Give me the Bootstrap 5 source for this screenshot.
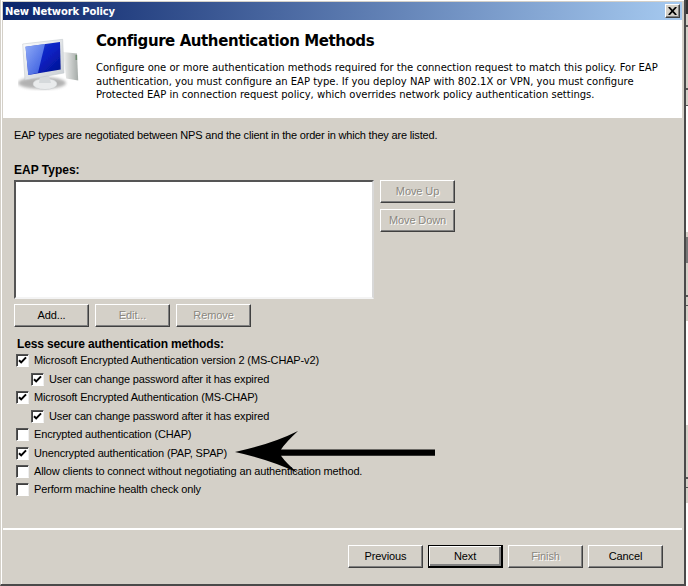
<!DOCTYPE html>
<html lang="en">
<head>
<meta charset="utf-8">
<title>New Network Policy</title>
<link href="https://cdn.jsdelivr.net/npm/bootstrap@5.3.0/dist/css/bootstrap.min.css" rel="stylesheet">
<style>
html,body{margin:0;height:586px;width:688px;overflow:hidden;background:#fff}
body{font-family:"Liberation Sans",Arial,sans-serif;font-size:11px;letter-spacing:-.18px;color:#000;line-height:14px}
.stage{width:688px;height:586px}
.frame{position:relative;width:686px;height:586px;background:#d4d0c8;border-left:1px solid #d4d0c8;border-right:2px solid #4a4a4a;border-bottom:2px solid #4a4a4a;box-shadow:inset 1px 1px 0 #fff;padding:2px 2px 0 2px}
.strip{width:2px;height:586px;background:linear-gradient(to bottom,#333 0 14px,#d4d0c8 14px 25px,#555 25px 27px,#d4d0c8 27px 88px,#555 88px 90px,#d4d0c8 90px 105px,#555 105px 106px,#fff 106px 232px,#d4d0c8 232px 237px,#777 237px 263px,#d4d0c8 263px 295px,#555 295px 297px,#d4d0c8 297px 305px,#555 305px 306px,#d4d0c8 306px 321px,#fff 321px 425px,#d4d0c8 425px 477px,#555 477px 479px,#d4d0c8 479px 487px,#555 487px 488px,#d4d0c8 488px 503px,#fff 503px)}
.titlebar{height:18px;background:linear-gradient(to right,#0a246a,#a6caf0);color:#fff;font-family:"DejaVu Sans",sans-serif;font-weight:700;font-size:10px;padding-left:2px;letter-spacing:-.14px}
.titletext{padding-top:1px}
.closebox{width:15px;height:14px;margin-right:2px;background:#d4d0c8;border:1px solid;border-color:#fff #404040 #404040 #fff;box-shadow:inset -1px -1px 0 #808080}
.headpane{height:98px;background:#fff}
.iconcell{width:93px;padding:16px 0 0 15px}
.headtitle{font-family:"DejaVu Sans",sans-serif;font-weight:700;font-size:15px;line-height:18px;margin:12px 0 0;letter-spacing:-.42px}
.headdesc{font-family:"DejaVu Sans",sans-serif;font-size:10px;line-height:13.5px;margin:11px 0 0;letter-spacing:0;white-space:nowrap}
.bodypane{padding:0 0 0 11px}
.intro{margin:10px 0 0;height:14px;white-space:nowrap}
.strongish{font-weight:700;font-size:12px}
.eaphead{margin:21px 0 3px;letter-spacing:0}
.listbox{width:360px;height:119px;background:#fff;border:2px solid;border-color:#555 #d8d8d8 #f4f4f4 #555;box-shadow:inset -1px -1px 0 #fff}
.winbtn.btn{width:75px;height:23px;padding:0;border-radius:0;background:#d4d0c8;color:#000;font-size:11px;letter-spacing:-.1px;line-height:19px;border:1px solid;border-color:#fff #404040 #404040 #fff;box-shadow:inset -1px -1px 0 #808080;--bs-btn-active-bg:#d4d0c8;opacity:1}
.winbtn.btn.disabled{color:#8a8780;text-shadow:1px 1px 0 #fff;border-color:#fff #404040 #404040 #fff;background:#d4d0c8;opacity:1}
.winbtn.btn.focused{outline:1px solid #000;outline-offset:-1px;border-color:#000;box-shadow:inset 1px 1px 0 #fff,inset -2px -2px 0 #808080;border-right-width:2px;border-bottom-width:2px;line-height:19px}
.sidebtns{margin-left:6px;gap:6px}
.addrow{margin-top:5px;gap:6px}
.lesshead{margin:10px 0 0 3px;letter-spacing:-.15px}
.opt{margin:0;min-height:0;padding:0;height:18px;display:flex;align-items:center;gap:5px;margin-left:2px}
.opt .form-check-input{float:none;margin:0;width:13px;height:13px;flex:none;border-radius:0;background-color:#fff;border:1px solid;border-color:#555 #eee #fff #555;box-shadow:inset 1px 1px 0 #404040;opacity:1}
.opt .form-check-input:checked{background-color:#fff;border-color:#555 #eee #fff #555;background-size:11px 11px;background-position:center;background-image:url("data:image/svg+xml,%3Csvg xmlns='http://www.w3.org/2000/svg' viewBox='0 0 11 11'%3E%3Cpath d='M2 5.2l2.2 2.2 4.8-5' fill='none' stroke='%23000' stroke-width='2'/%3E%3C/svg%3E")}
.opt .form-check-label{opacity:1;white-space:nowrap;line-height:14px;letter-spacing:-.15px}
.opt.sub{margin-left:17px;margin-top:1px}
.opt.gap1{margin-top:1px}
.footline{position:absolute;left:2px;right:2px;top:528px;height:2px;background:#fff}
.footbtns{position:absolute;top:545px;left:347px;gap:5px}
.arrowover{position:absolute;left:0;top:0;pointer-events:none}
</style>
</head>
<body>
<div class="stage d-flex">
  <div class="frame">
    <div class="titlebar d-flex align-items-center justify-content-between">
      <span class="titletext">New Network Policy</span>
      <div class="closebox d-flex align-items-center justify-content-center">
        <svg width="9" height="8" viewBox="0 0 9 8"><path d="M.8 0l7.4 8M8.200 0L.8 8" stroke="#000" stroke-width="1.800" fill="none"/></svg>
      </div>
    </div>
    <div class="headpane d-flex">
      <div class="iconcell">
        <svg width="62" height="56" viewBox="0 0 62 56">
          <defs>
            <linearGradient id="scr" x1="0" y1="0" x2="1" y2="1"><stop offset="0" stop-color="#2848d8"/><stop offset=".5" stop-color="#0a22c4"/><stop offset="1" stop-color="#02108c"/></linearGradient>
            <linearGradient id="gloss" x1="0" y1="0" x2="1" y2="1"><stop offset="0" stop-color="#a9c4ff"/><stop offset="1" stop-color="#3f66e6"/></linearGradient>
            <linearGradient id="bez" x1="0" y1="0" x2="1" y2="1"><stop offset="0" stop-color="#fbfcfd"/><stop offset="1" stop-color="#c8cdd2"/></linearGradient>
            <linearGradient id="tow" x1="0" y1="0" x2="1" y2="0"><stop offset="0" stop-color="#f2f2f2"/><stop offset="1" stop-color="#a5aba8"/></linearGradient>
            <filter id="sf"><feGaussianBlur stdDeviation=".45"/></filter>
            <filter id="sf2"><feGaussianBlur stdDeviation="1.800"/></filter>
          </defs>
          <g transform="translate(-18,-36)">
            <ellipse cx="42" cy="83" rx="24" ry="6" fill="#8a8a8a" opacity=".65" filter="url(#sf2)"/>
            <g filter="url(#sf)">
              <path d="M63 52l14 1.500 1.200 27-12-2z" fill="url(#tow)"/>
              <rect x="75.500" y="55" width="1.600" height="5" fill="#6e8c70"/>
              <ellipse cx="45" cy="84" rx="12" ry="5.500" fill="#e9ebec" stroke="#c4c8ca" stroke-width=".5"/>
              <path d="M40 76h9l2 7h-12z" fill="#d5d9db"/>
              <path d="M22.700 44L62.700 39.300 64 73 25 80z" fill="url(#bez)" stroke="#bfc5c9" stroke-width=".5"/>
              <path d="M25.500 46.700L60 42 60.700 69.500 28.300 75z" fill="url(#scr)"/>
              <path d="M25.500 46.700L45 44 38 72.800 28.300 75z" fill="url(#gloss)" opacity=".8"/>
            </g>
          </g>
        </svg>
      </div>
      <div>
        <h1 class="headtitle">Configure Authentication Methods</h1>
        <p class="headdesc">Configure one or more authentication methods required for the connection request to match this policy. For EAP<br>authentication, you must configure an EAP type. If you deploy NAP with 802.1X or VPN, you must configure<br>Protected EAP in connection request policy, which overrides network policy authentication settings.</p>
      </div>
    </div>
    <div class="bodypane">
      <p class="intro">EAP types are negotiated between NPS and the client in the order in which they are listed.</p>
      <div class="eaphead strongish">EAP Types:</div>
      <div class="d-flex">
        <div class="listbox"></div>
        <div class="sidebtns d-flex flex-column">
          <button type="button" class="btn winbtn disabled">Move Up</button>
          <button type="button" class="btn winbtn disabled">Move Down</button>
        </div>
      </div>
      <div class="addrow d-flex">
        <button type="button" class="btn winbtn">Add...</button>
        <button type="button" class="btn winbtn disabled">Edit...</button>
        <button type="button" class="btn winbtn disabled">Remove</button>
      </div>
      <div class="lesshead strongish">Less secure authentication methods:</div>
      <div class="form-check opt"><input class="form-check-input" type="checkbox" id="c1" checked><label class="form-check-label" for="c1">Microsoft Encrypted Authentication version 2 (MS-CHAP-v2)</label></div>
      <div class="form-check opt sub"><input class="form-check-input" type="checkbox" id="c2" checked><label class="form-check-label" for="c2">User can change password after it has expired</label></div>
      <div class="form-check opt"><input class="form-check-input" type="checkbox" id="c3" checked><label class="form-check-label" for="c3">Microsoft Encrypted Authentication (MS-CHAP)</label></div>
      <div class="form-check opt sub"><input class="form-check-input" type="checkbox" id="c4" checked><label class="form-check-label" for="c4">User can change password after it has expired</label></div>
      <div class="form-check opt"><input class="form-check-input" type="checkbox" id="c5"><label class="form-check-label" for="c5">Encrypted authentication (CHAP)</label></div>
      <div class="form-check opt gap1"><input class="form-check-input" type="checkbox" id="c6" checked><label class="form-check-label" for="c6">Unencrypted authentication (PAP, SPAP)</label></div>
      <div class="form-check opt"><input class="form-check-input" type="checkbox" id="c7"><label class="form-check-label" for="c7">Allow clients to connect without negotiating an authentication method.</label></div>
      <div class="form-check opt"><input class="form-check-input" type="checkbox" id="c8"><label class="form-check-label" for="c8">Perform machine health check only</label></div>
    </div>
    <div class="footline"></div>
    <div class="footbtns d-flex">
      <button type="button" class="btn winbtn">Previous</button>
      <button type="button" class="btn winbtn focused">Next</button>
      <button type="button" class="btn winbtn disabled">Finish</button>
      <button type="button" class="btn winbtn">Cancel</button>
    </div>
    <svg class="arrowover" width="686" height="586" viewBox="1 0 686 586"><path d="M235 452Q272 444 298 431Q286 442 281 449.500L435 449.500L435 455.700L281 455.700Q286 463 298 473Q272 460 235 452Z" fill="#000"/></svg>
  </div>
  <div class="strip"></div>
</div>
<script src="https://cdn.jsdelivr.net/npm/bootstrap@5.3.0/dist/js/bootstrap.bundle.min.js"></script>
</body>
</html>
